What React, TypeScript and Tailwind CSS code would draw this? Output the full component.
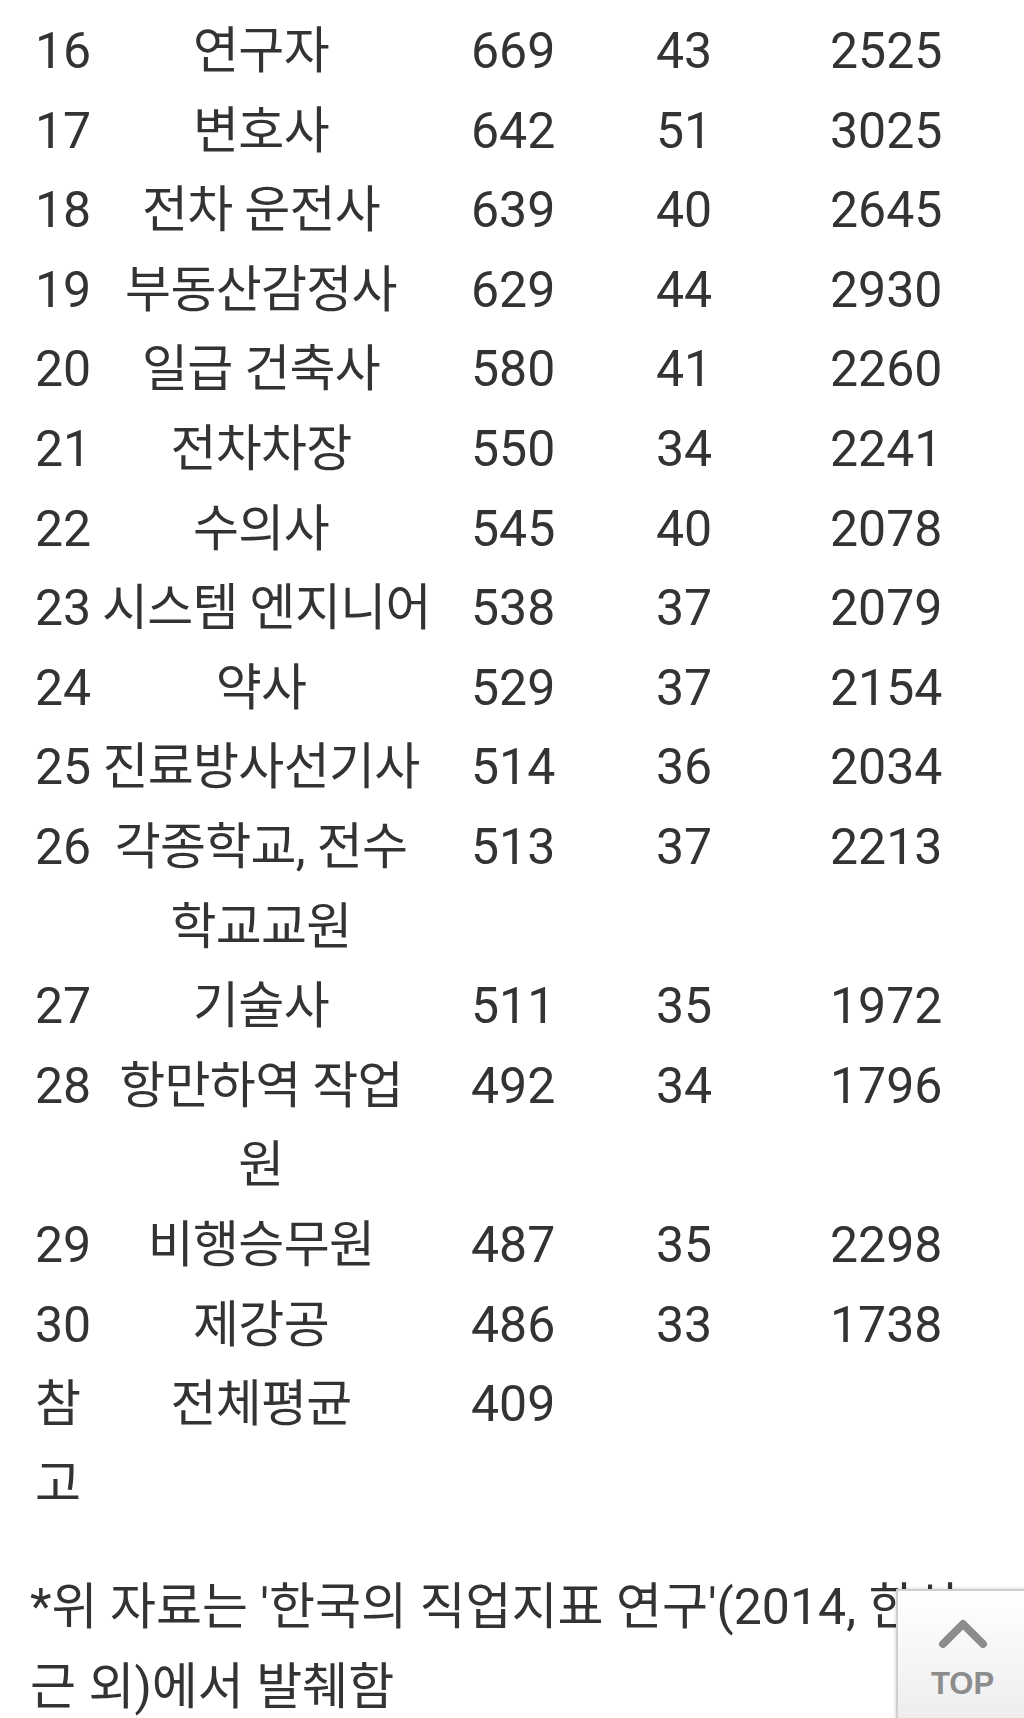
const rows: [string, string[], string, string, string][] = [
  ["16", ["연구자"], "669", "43", "2525"],
  ["17", ["변호사"], "642", "51", "3025"],
  ["18", ["전차 운전사"], "639", "40", "2645"],
  ["19", ["부동산감정사"], "629", "44", "2930"],
  ["20", ["일급 건축사"], "580", "41", "2260"],
  ["21", ["전차차장"], "550", "34", "2241"],
  ["22", ["수의사"], "545", "40", "2078"],
  ["23", ["시스템 엔지니어"], "538", "37", "2079"],
  ["24", ["약사"], "529", "37", "2154"],
  ["25", ["진료방사선기사"], "514", "36", "2034"],
  ["26", ["각종학교, 전수", "학교교원"], "513", "37", "2213"],
  ["27", ["기술사"], "511", "35", "1972"],
  ["28", ["항만하역 작업", "원"], "492", "34", "1796"],
  ["29", ["비행승무원"], "487", "35", "2298"],
  ["30", ["제강공"], "486", "33", "1738"],
]

export default function App() {
  return (
    <div className="relative h-[1718px] w-[1024px] overflow-hidden bg-white text-[#333] font-['Roboto','Noto_Sans_CJK_KR',sans-serif] text-[50px] leading-[79.6px]">
      <div className="pt-[12px] pl-[35px]">
        {rows.map(([rank, name, a, b, c]) => (
          <div key={rank} className="grid grid-cols-[67px_318px_236px_174px_1fr]">
            <div>{rank}</div>
            <div className="whitespace-nowrap text-center tracking-[-0.7px]">
              {name.map((line) => (
                <div key={line}>{line}</div>
              ))}
            </div>
            <div className="pl-[51px]">{a}</div>
            <div>{b}</div>
            <div>{c}</div>
          </div>
        ))}
        <div className="grid grid-cols-[67px_318px_236px_174px_1fr]">
          <div>
            <div>참</div>
            <div>고</div>
          </div>
          <div className="text-center tracking-[-0.7px]">전체평균</div>
          <div className="pl-[51px]">409</div>
          <div />
          <div />
        </div>
      </div>

      <p className="mt-[44px] pl-[30px] pr-[40px]">
        *위 자료는 '한국의 직업지표 연구'(2014, 한상근 외)에서 발췌함
      </p>

      <button className="absolute left-[896px] top-[1589px] flex h-[140px] w-[140px] flex-col items-center border-l-2 border-t-2 border-[#cfcfcf] bg-gradient-to-b from-white to-[#ececec] pt-[25px] shadow-[-1px_-1px_3px_rgba(0,0,0,0.12)]">
        <svg width="52" height="34" viewBox="0 0 52 34" className="ml-[-8px]">
          <path d="M6 28 L26 8 L46 28" fill="none" stroke="#8c8c8c" strokeWidth="8" strokeLinecap="round" strokeLinejoin="round" />
        </svg>
        <span className="mt-[18px] ml-[-9px] font-['Liberation_Sans',sans-serif] text-[31px] font-bold leading-none text-[#8c8c8c]">
          TOP
        </span>
      </button>
    </div>
  )
}
